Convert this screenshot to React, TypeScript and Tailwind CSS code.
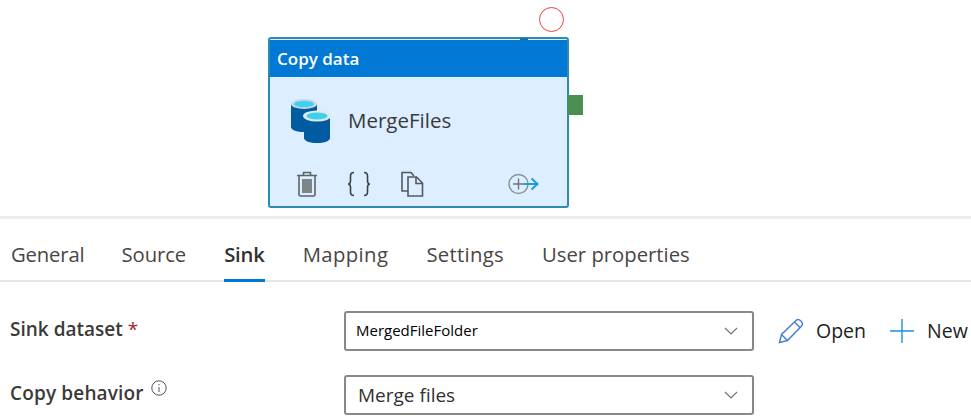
const font = { fontFamily: '"Open Sans", "Noto Sans", sans-serif' };

function Cylinders() {
  return (
    <svg width="42" height="46" viewBox="0 0 42 46">
      <path d="M1 6 V29 C1 32 7 34 14 34 C21 34 27 32 27 29 V6 Z" fill="#005ba1" />
      <ellipse cx="14" cy="6" rx="13" ry="5" fill="#c8d8e4" />
      <ellipse cx="14" cy="6" rx="10" ry="3.2" fill="#3fd0f0" />
      <path d="M14 18 V40 C14 43 20 45 27 45 C34 45 40 43 40 40 V18 Z" fill="#005ba1" />
      <ellipse cx="27" cy="18" rx="14" ry="5.5" fill="#dfe9ef" />
      <ellipse cx="27" cy="18" rx="10.5" ry="3.4" fill="#3fd0f0" />
    </svg>
  );
}

function Trash() {
  return (
    <svg width="22" height="26" viewBox="0 0 22 26" fill="none" stroke="#5f6468" strokeWidth="1.6">
      <path d="M1 4.5 H21 M7.5 4 V1.5 H14.5 V4" />
      <path d="M3 5 V23.5 Q3 25 4.5 25 H17.5 Q19 25 19 23.5 V5" />
      <rect x="6" y="8" width="10" height="14" fill="#7d8387" stroke="none" />
    </svg>
  );
}

function Braces() {
  return (
    <svg width="24" height="26" viewBox="0 0 24 26" fill="none" stroke="#3f4347" strokeWidth="1.6">
      <path d="M7 1.5 Q3.5 1.5 3.5 5 V9.5 Q3.5 13 1 13 Q3.5 13 3.5 16.5 V21 Q3.5 24.5 7 24.5" />
      <path d="M17 1.5 Q20.5 1.5 20.5 5 V9.5 Q20.5 13 23 13 Q20.5 13 20.5 16.5 V21 Q20.5 24.5 17 24.5" />
    </svg>
  );
}

function Copy() {
  return (
    <svg width="24" height="26" viewBox="0 0 24 26" fill="none" stroke="#55595d" strokeWidth="1.6">
      <path d="M9 20 H2 V1.5 H11 L14 5" />
      <path d="M8 6 H16.5 L22.5 12 V25 H8 Z" fill="#ddeeff" />
      <path d="M16 6 V12.5 H22.5" />
    </svg>
  );
}

function AddArrow() {
  return (
    <svg width="32" height="22" viewBox="0 0 32 22" fill="none">
      <circle cx="10.5" cy="11" r="9.5" stroke="#8b9198" strokeWidth="1.4" />
      <path d="M5 11 H16 M10.5 5.5 V16.5" stroke="#6f757b" strokeWidth="1.4" />
      <path d="M16 11 H29 M23.5 5.5 L29.5 11 L23.5 16.5" stroke="#1c9fd4" strokeWidth="2" />
    </svg>
  );
}

function Chevron() {
  return (
    <svg width="14" height="8" viewBox="0 0 14 8" fill="none" stroke="#6b6f76" strokeWidth="1.1">
      <path d="M1 1 L7 7 L13 1" />
    </svg>
  );
}

function Pencil() {
  return (
    <svg width="26" height="26" viewBox="0 0 26 26" fill="none" stroke="#4a7fd6" strokeWidth="1.5">
      <path d="M1.5 24.5 L3.5 16.5 L18.5 2 Q20.5 0.8 23 3 Q25.2 5.4 24 7.5 L9.5 22.5 Z" />
      <path d="M3.5 16.5 L9.5 22.5 M16.5 4 L22 9.5" />
    </svg>
  );
}

function Plus() {
  return (
    <svg width="24" height="24" viewBox="0 0 24 24" fill="none" stroke="#1f8fe0" strokeWidth="1.4">
      <path d="M0 12 H24 M12 0 V24" />
    </svg>
  );
}

function Info() {
  return (
    <svg width="16" height="16" viewBox="0 0 16 16" fill="none" stroke="#4b5563" strokeWidth="1">
      <circle cx="8" cy="8" r="7.2" />
      <path d="M8 7 V12 M8 4 V5.4" />
    </svg>
  );
}

export default function App() {
  return (
    <div className="w-[971px] h-[419px] overflow-hidden bg-white text-[#323130]" style={font}>
      <div className="h-[219px] pt-[37px] pl-[268px] border-b-[3px] border-[#ececec]">
        <div className="relative w-[301px] h-[171px]">
          <div className="absolute left-[271px] -top-[30px] w-[25px] h-[25px] rounded-full border border-[#f04040] bg-white" />
          <div className="absolute left-[300px] top-[58px] w-[15px] h-[20px] bg-[#4a8f4f]" />
          <div className="absolute left-[252px] top-[1px] w-[8px] h-[2px] bg-[#1f6fa8]" />
          <div className="flex flex-col w-full h-full rounded-[3px] border-2 border-[#2f8ab0] bg-[#dceeff] overflow-hidden">
            <div className="mt-[1px] h-[37px] shrink-0 bg-[#0078d4] text-white text-[17px] flex items-center pl-[7px] font-semibold">
              Copy data
            </div>
            <div className="flex items-center pl-[20px] pt-[21px] gap-[16px]">
              <Cylinders />
              <span className="text-[20.5px] text-[#3b3a39] -mt-[2px]">MergeFiles</span>
            </div>
            <div className="flex items-center pl-[26px] mt-[27px]">
              <Trash />
              <span className="ml-[29px]"><Braces /></span>
              <span className="ml-[29px]"><Copy /></span>
              <span className="ml-[84px]"><AddArrow /></span>
            </div>
          </div>
        </div>
      </div>

      <div className="h-[63px] border-b-2 border-[#e6e6e6] flex items-stretch pl-[11px] gap-[38px] text-[20.3px] text-[#484644]">
        <div className="pt-[20px] -mr-[1px] tracking-[-0.15px]">General</div>
        <div className="pt-[20px] tracking-[-0.1px]">Source</div>
        <div className="pt-[20px] font-semibold text-[#323130] border-b-[3px] border-[#0078d4] -mb-[2px] tracking-[-0.2px]">Sink</div>
        <div className="pt-[20px] tracking-[0.4px]">Mapping</div>
        <div className="pt-[20px] tracking-[0.3px]">Settings</div>
        <div className="pt-[20px]">User properties</div>
      </div>

      <div className="flex flex-col gap-[24px] pt-[29px] pl-[10px]">
        <div className="flex items-center">
          <div className="w-[334px] text-[19px] font-semibold text-[#3b3a39] -mt-[4px]">
            Sink dataset <span className="text-[#a4262c] font-normal">*</span>
          </div>
          <div className="w-[410px] h-[40px] border-2 border-[#8a8886] rounded-[3px] flex items-center justify-between pl-[10px] pr-[14px] text-[15px] text-black">
            <span className="-mt-[2px]">MergedFileFolder</span>
            <Chevron />
          </div>
          <div className="flex items-center ml-[24px] text-[19.5px] text-[#201f1e]">
            <Pencil />
            <span className="ml-[12px]">Open</span>
            <span className="ml-[24px]"><Plus /></span>
            <span className="ml-[13px]">New</span>
          </div>
        </div>
        <div className="flex items-center">
          <div className="w-[334px] flex items-start gap-[7px] text-[19px] font-semibold tracking-[0.15px] text-[#3b3a39] -mt-[4px]">
            Copy behavior
            <span className="mt-[1px]"><Info /></span>
          </div>
          <div className="w-[410px] h-[40px] border-2 border-[#8a8886] rounded-[3px] flex items-center justify-between pl-[12px] pr-[14px] text-[19px] text-[#323130]">
            Merge files
            <Chevron />
          </div>
        </div>
      </div>
    </div>
  );
}
